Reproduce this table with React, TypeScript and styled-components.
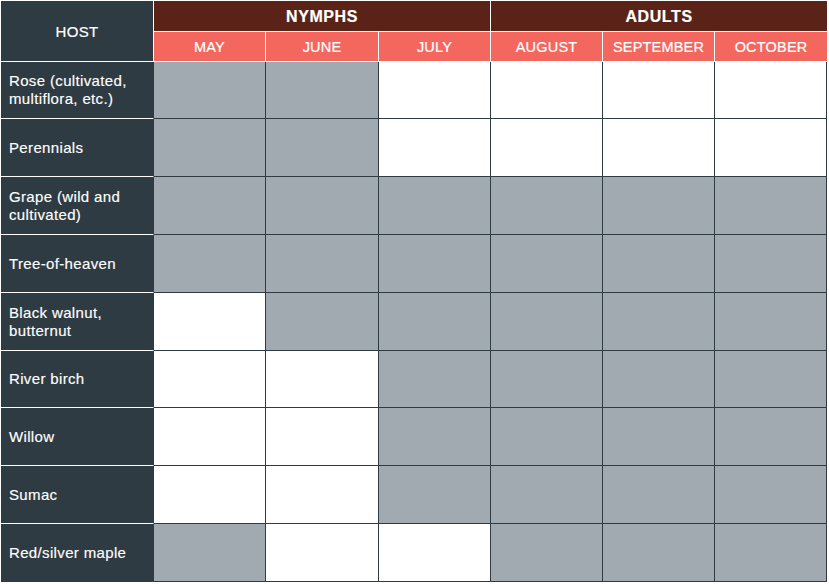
import * as React from 'react';
import styled, { createGlobalStyle } from 'styled-components';

const GlobalStyle = createGlobalStyle`
  html, body {
    margin: 0;
    padding: 0;
    background: #ffffff;
  }
  body {
    font-family: "Liberation Sans", Arial, sans-serif;
  }
`;

const DARK = '#2f3b42';
const MAROON = '#5b2218';
const CORAL = '#f4675f';
const GREY = '#a1aab1';

const months = ['MAY', 'JUNE', 'JULY', 'AUGUST', 'SEPTEMBER', 'OCTOBER'];
const colWidths = [153, 112, 113, 112, 112, 112, 112];

// 1 = host plant used in that month (grey), 0 = not used (white)
const hosts: { name: React.ReactNode; months: number[]; height: number }[] = [
  { name: <>Rose (cultivated,<br />multiflora, etc.)</>, months: [1, 1, 0, 0, 0, 0], height: 57 },
  { name: 'Perennials', months: [1, 1, 0, 0, 0, 0], height: 58 },
  { name: <>Grape (wild and<br />cultivated)</>, months: [1, 1, 1, 1, 1, 1], height: 58 },
  { name: 'Tree-of-heaven', months: [1, 1, 1, 1, 1, 1], height: 58 },
  { name: <>Black walnut,<br />butternut</>, months: [0, 1, 1, 1, 1, 1], height: 58 },
  { name: 'River birch', months: [0, 0, 1, 1, 1, 1], height: 57 },
  { name: 'Willow', months: [0, 0, 1, 1, 1, 1], height: 58 },
  { name: 'Sumac', months: [0, 0, 1, 1, 1, 1], height: 58 },
  { name: 'Red/silver maple', months: [1, 0, 0, 1, 1, 1], height: 58 },
];

export default function App() {
  return (
    <>
      <GlobalStyle />
      <Page>
        <Table>
          <colgroup>
            {colWidths.map((w, i) => (
              <Col key={i} $w={w} />
            ))}
          </colgroup>
          <thead>
            <Row $h={31}>
              <HostHead rowSpan={2}>HOST</HostHead>
              <SeasonHead colSpan={3}>NYMPHS</SeasonHead>
              <SeasonHead colSpan={3}>ADULTS</SeasonHead>
            </Row>
            <Row $h={30}>
              {months.map((m) => (
                <MonthHead key={m}>{m}</MonthHead>
              ))}
            </Row>
          </thead>
          <tbody>
            {hosts.map((h, i) => (
              <Row key={i} $h={h.height}>
                <HostCell $last={i === hosts.length - 1}>{h.name}</HostCell>
                {h.months.map((on, j) => (
                  <DataCell key={j} $on={on === 1} />
                ))}
              </Row>
            ))}
          </tbody>
        </Table>
      </Page>
    </>
  );
}

const Page = styled.div`
  padding: 1px 0 0 1px;
`;

const Table = styled.table`
  width: 826px;
  table-layout: fixed;
  border-collapse: separate;
  border-spacing: 0;
`;

const Col = styled.col<{ $w: number }>`
  width: ${(p) => p.$w}px;
`;

const Row = styled.tr<{ $h: number }>`
  height: ${(p) => p.$h}px;
`;

const HeadBase = styled.th`
  box-sizing: border-box;
  padding: 0;
  color: #ffffff;
  text-align: center;
  vertical-align: middle;
  border-right: 1px solid #ffffff;
  border-bottom: 1px solid #ffffff;
  -webkit-text-stroke: 0.2px #ffffff;
`;

const HostHead = styled(HeadBase)`
  background: ${DARK};
  font-size: 15px;
  font-weight: normal;
  letter-spacing: 0.3px;
`;

const SeasonHead = styled(HeadBase)`
  background: ${MAROON};
  font-size: 16px;
  font-weight: bold;
  letter-spacing: 0.6px;
  padding-top: 1px;
  &:last-child {
    border-right: none;
  }
`;

const MonthHead = styled(HeadBase)`
  background: ${CORAL};
  font-size: 14.5px;
  font-weight: normal;
  letter-spacing: 0.2px;
  &:last-child {
    border-right: none;
  }
`;

const HostCell = styled.td<{ $last?: boolean }>`
  box-sizing: border-box;
  padding: 0 0 0 8px;
  background: ${DARK};
  color: #ffffff;
  font-size: 15px;
  letter-spacing: 0.35px;
  line-height: 18px;
  vertical-align: middle;
  -webkit-text-stroke: 0.15px #ffffff;
  border-right: 1px solid ${DARK};
  border-bottom: 1px solid ${(p) => (p.$last ? DARK : '#ffffff')};
`;

const DataCell = styled.td<{ $on: boolean }>`
  box-sizing: border-box;
  padding: 0;
  background: ${(p) => (p.$on ? GREY : '#ffffff')};
  border-right: 1px solid ${DARK};
  border-bottom: 1px solid ${DARK};
`;
